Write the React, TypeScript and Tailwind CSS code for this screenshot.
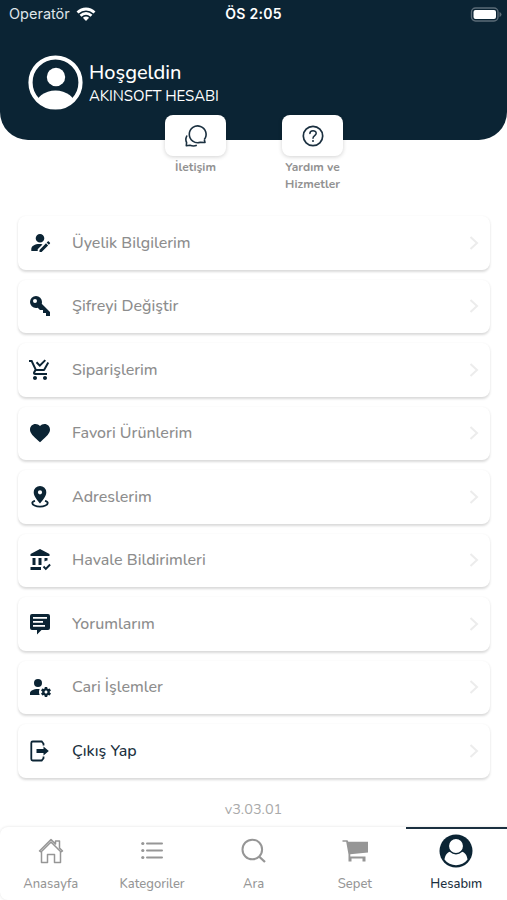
import type { ReactNode } from "react";

interface IMenuItem {
  label: string;
  icon: ReactNode;
  active?: boolean;
}

interface ITab {
  label: string;
  icon: ReactNode;
  active?: boolean;
}

const Glyph = ({ d }: { d: string }) => (
  <svg viewBox="0 0 24 24" className="size-6" fill="currentColor">
    <path fillRule="evenodd" d={d} />
  </svg>
);

const menuItems: IMenuItem[] = [
  {
    label: "Üyelik Bilgilerim",
    icon: (
      <Glyph d="M22 12.500L20.800 13.700L18.700 11.600L19.800 10.500C20.100 10.200 20.500 10.200 20.800 10.500L22 11.700C22.200 11.900 22.200 12.200 22 12.500M11.500 18.900L18 12.300L20.100 14.400L13.600 21H11.500V18.900M11.500 13C7 13 3.300 15 3.300 18V20H9.700V18.200L14.500 13.400C13.500 13.100 12.500 13 11.500 13M12 3A4.300 4.300 0 0 0 7.700 7.300A4.300 4.300 0 0 0 12 11.600A4.300 4.300 0 0 0 16.300 7.300A4.300 4.300 0 0 0 12 3Z" />
    ),
  },
  {
    label: "Şifreyi Değiştir",
    icon: (
      <Glyph d="M22,18V22H18V19H15V16H12L9.74,13.74C9.19,13.91 8.61,14 8,14A6,6 0 0,1 2,8A6,6 0 0,1 8,2A6,6 0 0,1 14,8C14,8.61 13.91,9.19 13.74,9.74L22,18M7,5A2,2 0 0,0 5,7A2,2 0 0,0 7,9A2,2 0 0,0 9,7A2,2 0 0,0 7,5Z" />
    ),
  },
  {
    label: "Siparişlerim",
    icon: (
      <Glyph d="M9 20C9 21.1 8.1 22 7 22S5 21.1 5 20 5.9 18 7 18 9 18.9 9 20M17 18C15.9 18 15 18.9 15 20S15.9 22 17 22 19 21.1 19 20 18.1 18 17 18M7.2 14.8V14.7L8.1 13H15.5C16.2 13 16.9 12.6 17.2 12L21.1 5L19.4 4L15.5 11H8.5L4.3 2H1V4H3L6.6 11.6L5.2 14C5.1 14.3 5 14.6 5 15C5 16.1 5.9 17 7 17H19V15H7.4C7.3 15 7.2 14.9 7.2 14.8M18 2.8L16.6 1.4L11.8 6.2L9.2 3.6L7.8 5L11.8 9L18 2.8Z" />
    ),
  },
  {
    label: "Favori Ürünlerim",
    icon: (
      <Glyph d="M12,21.35L10.55,20.03C5.4,15.36 2,12.27 2,8.5C2,5.41 4.42,3 7.5,3C9.24,3 10.91,3.81 12,5.08C13.09,3.81 14.76,3 16.5,3C19.58,3 22,5.41 22,8.5C22,12.27 18.6,15.36 13.45,20.03L12,21.35Z" />
    ),
  },
  {
    label: "Adreslerim",
    icon: (
      <svg viewBox="0 0 24 24" className="size-6" fill="none">
        <path
          d="M7 15.800c-1.700.5-2.700 1.200-2.700 2.100 0 2 3.500 3.700 7.700 3.700s7.700-1.700 7.700-3.700c0-.9-1-1.600-2.700-2.100"
          stroke="currentColor"
          strokeWidth="1.900"
        />
        <path
          fill="currentColor"
          fillRule="evenodd"
          d="M12 1A6.300 6.300 0 0 0 5.700 7.300C5.700 11.700 10 16 12 18.500C14 16 18.300 11.700 18.300 7.300A6.300 6.300 0 0 0 12 1M12 5.200A2.100 2.100 0 1 1 12 9.400A2.100 2.100 0 0 1 12 5.200Z"
        />
      </svg>
    ),
  },
  {
    label: "Havale Bildirimleri",
    icon: (
      <Glyph d="M12 1L2.500 6V8H21.500V6M4.500 10V17H7.500V10M10.500 10V17H13.500V10M16.500 10V13.500C17.400 13 18.400 12.700 19.500 12.600V10M2.500 19V22H13V19M17.800 22.200L14.800 19.200L16.200 17.800L17.800 19.400L21.400 15.800L22.800 17.200Z" />
    ),
  },
  {
    label: "Yorumlarım",
    icon: (
      <Glyph d="M4 2H20A2 2 0 0 1 22 4V16A2 2 0 0 1 20 18H13.500L9 22.500V18H4A2 2 0 0 1 2 16V4A2 2 0 0 1 4 2M5 5V6.700H19V5M5 9V10.700H15V9M5 13V14.700H17V13Z" />
    ),
  },
  {
    label: "Cari İşlemler",
    icon: (
      <Glyph d="M10 4A4 4 0 0 0 6 8A4 4 0 0 0 10 12A4 4 0 0 0 14 8A4 4 0 0 0 10 4M17 12C16.87 12 16.76 12.09 16.74 12.21L16.55 13.53C16.25 13.66 15.96 13.82 15.7 14L14.46 13.5C14.35 13.5 14.22 13.5 14.15 13.63L13.15 15.36C13.09 15.47 13.11 15.6 13.21 15.68L14.27 16.5C14.25 16.67 14.24 16.83 14.24 17C14.24 17.17 14.25 17.33 14.27 17.5L13.21 18.32C13.12 18.4 13.09 18.53 13.15 18.64L14.15 20.37C14.21 20.5 14.34 20.5 14.46 20.5L15.7 20C15.96 20.18 16.24 20.35 16.55 20.47L16.74 21.79C16.76 21.91 16.86 22 17 22H19C19.11 22 19.22 21.91 19.24 21.79L19.43 20.47C19.73 20.34 20 20.18 20.27 20L21.5 20.5C21.63 20.5 21.76 20.5 21.83 20.37L22.83 18.64C22.89 18.53 22.86 18.4 22.77 18.32L21.7 17.5C21.72 17.33 21.74 17.17 21.74 17C21.74 16.83 21.73 16.67 21.7 16.5L22.76 15.68C22.85 15.6 22.88 15.47 22.82 15.36L21.82 13.63C21.76 13.5 21.63 13.5 21.5 13.5L20.27 14C20 13.82 19.73 13.65 19.42 13.53L19.23 12.21C19.22 12.09 19.11 12 19 12H17M10 14C5.58 14 2 15.79 2 18V20H11.68A7 7 0 0 1 11 17A7 7 0 0 1 11.64 14.09C11.11 14.03 10.56 14 10 14M18 15.5C18.83 15.5 19.5 16.17 19.5 17C19.5 17.84 18.83 18.5 18 18.5C17.16 18.5 16.5 17.84 16.5 17C16.5 16.17 17.17 15.5 18 15.5Z" />
    ),
  },
  {
    label: "Çıkış Yap",
    active: true,
    icon: (
      <svg viewBox="0 0 24 24" className="size-6" fill="none">
        <path
          d="M15.500 6.500V4.700L13.700 2.500H4.700Q3.300 2.500 3.300 3.900V20.100Q3.300 21.500 4.700 21.500H13.700L15.500 19.300V17.500"
          stroke="currentColor"
          strokeWidth="1.800"
        />
        <path
          fill="currentColor"
          d="M8.500 10H15.500V7.500L20.800 12L15.500 16.500V14H8.500Z"
        />
      </svg>
    ),
  },
];

const tabs: ITab[] = [
  {
    label: "Anasayfa",
    icon: (
      <svg viewBox="0 0 28 28" className="size-7" fill="none" stroke="currentColor" strokeWidth="1.500" strokeLinejoin="round">
        <path d="M2.500 14L14 2.500L18.500 7V4H22.500V11L25.500 14L24 15L14 5L4 15ZM4.500 14.500V25.500H10.500V17.500H17.500V25.500H23.500V14.500" />
      </svg>
    ),
  },
  {
    label: "Kategoriler",
    icon: (
      <svg viewBox="0 0 28 28" className="size-7" fill="currentColor" stroke="currentColor">
        <path d="M9 6.500H24M9 13.500H24M9 20.500H24" strokeWidth="2" strokeLinecap="round" />
        <circle cx="4.800" cy="6.500" r="1.600" stroke="none" />
        <circle cx="4.800" cy="13.500" r="1.600" stroke="none" />
        <circle cx="4.800" cy="20.500" r="1.600" stroke="none" />
      </svg>
    ),
  },
  {
    label: "Ara",
    icon: (
      <svg viewBox="0 0 28 28" className="size-7" fill="none" stroke="currentColor" strokeWidth="2">
        <circle cx="13.300" cy="12.500" r="9.800" />
        <path d="M20 19.500L26 25" strokeWidth="2.300" />
      </svg>
    ),
  },
  {
    label: "Sepet",
    icon: (
      <svg viewBox="0 0 28 28" className="size-7" fill="currentColor">
        <path fillRule="evenodd" d="M1.500 3.200H6.500L7.300 4.800H27V15.500L9.300 17.300V19.500H24.500V24.500H21.500V21.500H10.500V24.500H7.500V17.500L5.200 4.800H1.500Z" />
      </svg>
    ),
  },
  {
    label: "Hesabım",
    active: true,
    icon: (
      <svg viewBox="0 0 34 34" className="size-[34px]" fill="none">
        <circle cx="17" cy="17" r="16.500" fill="#0b2434" />
        <path d="M5.500 25.500C6 21 8.500 18 12 17.500H22C25.500 18 28 21 28.500 25.500C23 33 11 33 5.500 25.500Z" fill="#fff" />
        <circle cx="17" cy="12" r="7.700" fill="#fff" stroke="#0b2434" strokeWidth="1.500" />
      </svg>
    ),
  },
];

const StatusBar = () => (
  <div className="grid h-7 grid-cols-3 items-center font-['Inter',sans-serif] text-sm leading-none text-white">
    <div className="flex items-center gap-[6px] pl-[9px] text-[14.500px] text-[#dfe5e9]">
      Operatör
      <svg viewBox="0 0 20 15" className="h-[15px] w-5" fill="none" stroke="#fff" strokeWidth="2.800">
        <path d="M1.500 5.500C6.500 .8 13.500 .8 18.500 5.500M4.500 8.700C7.800 5.700 12.200 5.700 15.500 8.700" />
        <path d="M6.900 10.700Q10 8.300 13.100 10.700L10 14Z" fill="#fff" stroke="none" />
      </svg>
    </div>
    <div className="text-center font-semibold tracking-[0.300px]">ÖS 2:05</div>
    <div className="flex justify-end pr-[5px]">
      <svg viewBox="0 0 32 15" className="h-[15px] w-8" fill="none">
        <rect x="1.500" y="1" width="26.500" height="13" rx="4" stroke="#5b6b77" strokeWidth="1.400" />
        <rect x="3.500" y="3" width="22.500" height="9" rx="2" fill="#fff" />
        <path d="M29.500 5V10Q31.500 9.300 31.500 7.500Q31.500 5.700 29.500 5Z" fill="#5b6b77" />
      </svg>
    </div>
  </div>
);

const QuickAction = ({ icon, children }: { icon: ReactNode; children: ReactNode }) => (
  <div className="flex w-[61px] flex-col items-center">
    <div className="flex h-[41px] w-[61px] shrink-0 items-center justify-center rounded-lg bg-white text-[#1b3040] shadow-[0_1px_4px_rgba(0,0,0,0.18)]">
      {icon}
    </div>
    <div className="mt-[3px] text-center text-xs leading-[16.500px] font-bold whitespace-nowrap text-[#929292]">
      {children}
    </div>
  </div>
);

const App = () => {
  return (
    <div className="flex h-[900px] w-[507px] flex-col overflow-hidden bg-white font-['Nunito','Lato',sans-serif]">
      <header className="h-[139.500px] shrink-0 rounded-b-[28px] bg-[#0b2434] text-white">
        <StatusBar />
        <div className="flex items-center gap-[6px] pt-[27px] pl-[28px]">
          <svg viewBox="0 0 55 55" className="size-[55px]">
            <defs>
              <clipPath id="avatar">
                <circle cx="27.500" cy="27.500" r="26" />
              </clipPath>
            </defs>
            <circle cx="27.500" cy="27.500" r="25" fill="none" stroke="#fff" strokeWidth="4.200" />
            <circle cx="28" cy="22" r="9.200" fill="#fff" />
            <ellipse cx="27.500" cy="51" rx="20" ry="15.500" fill="#fff" clipPath="url(#avatar)" />
          </svg>
          <div className="pt-[2px]">
            <h1 className="text-[20px] leading-6 font-medium">Hoşgeldin</h1>
            <p className="text-[15px] leading-[22px] tracking-[-0.100px]">AKINSOFT HESABI</p>
          </div>
        </div>
      </header>

      <div className="relative -mt-[24.500px] flex h-[101px] shrink-0 justify-center gap-[56px] pl-px">
        <QuickAction
          icon={
            <svg viewBox="0 0 24 24" className="size-6" fill="none" stroke="currentColor" strokeWidth="1.600" strokeLinejoin="round">
              <path d="M20.300 15.500A8.400 8.400 0 1 0 16.300 18.300L21 18.500L20.300 15.500" />
              <path d="M3 11.500Q.9 15.500 2.600 18.500L2.300 21.800L6 21.200Q9.500 22.700 12.800 21.200" />
            </svg>
          }
        >
          İletişim
        </QuickAction>
        <QuickAction
          icon={
            <svg viewBox="0 0 24 24" className="size-6" fill="none" stroke="currentColor" strokeWidth="1.700">
              <circle cx="12" cy="12" r="9.700" />
              <path d="M8.900 9.500C8.900 5.700 15.200 5.900 15.200 9.300C15.200 11.600 12 11.700 12 14.300" strokeWidth="1.500" strokeLinecap="round" />
              <circle cx="12" cy="17" r="1" fill="currentColor" stroke="none" />
            </svg>
          }
        >
          Yardım ve
          <br />
          Hizmetler
        </QuickAction>
      </div>

      <main className="flex shrink-0 flex-col gap-[10px] pr-[17px] pl-[18px]">
        {menuItems.map((item) => (
          <button
            key={item.label}
            className="flex h-[53.500px] items-center rounded-lg bg-white pr-[9px] pl-[10px] text-left text-[#0b2434] shadow-[0_1.500px_2.500px_rgba(0,0,0,0.15)]"
          >
            {item.icon}
            <span
              className={`ml-5 flex-1 text-base font-medium ${
                item.active ? "text-[#1b3040]" : "text-[#8d8d8d]"
              }`}
            >
              {item.label}
            </span>
            <svg viewBox="0 0 14 18" className="h-[18px] w-[14px]" fill="none" stroke="#ececec" strokeWidth="2">
              <path d="M3.500 3L10 9L3.500 15" />
            </svg>
          </button>
        ))}
      </main>

      <div className="flex flex-1 items-end justify-center pb-[8px] text-[14.500px] leading-5 text-[#aaa]">v3.03.01</div>

      <nav className="grid h-[73px] shrink-0 grid-cols-5 rounded-l-lg bg-white shadow-[0_0_3px_rgba(0,0,0,0.12)]">
        {tabs.map((tab) => (
          <div
            key={tab.label}
            className={`flex flex-col items-center border-t-2 ${
              tab.active ? "border-[#1b3040] text-[#1b3040]" : "border-transparent text-[#969696]"
            }`}
          >
            <div className="flex h-[44px] items-center">{tab.icon}</div>
            <span className="mt-px text-[13px] leading-5 font-medium">{tab.label}</span>
          </div>
        ))}
      </nav>
    </div>
  );
};

export default App;
